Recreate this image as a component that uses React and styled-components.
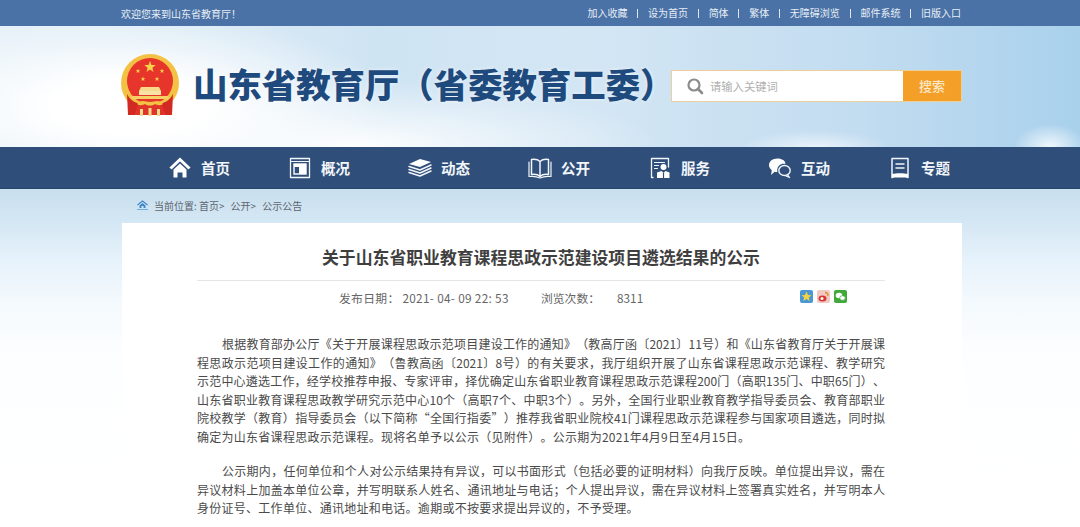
import React from "react";
import styled, { createGlobalStyle } from "styled-components";

const Global = createGlobalStyle`
  html, body { margin: 0; padding: 0; background: #fff; overflow: hidden; }
  body { font-family: "Noto Sans CJK SC", "Noto Sans", sans-serif; text-spacing-trim: space-all; font-kerning: none; }
`;
const Page = styled.div`
  width: 1080px; height: 527px; overflow: hidden; background: #fff;
`;
const Inner = styled.div`
  width: 840px; margin-left: 121px; display: flex; align-items: center;
`;
const TopBar = styled.div`
  height: 26px; background: #4a72a6; color: #e8eef6; font-size: 10px;
  display: flex; align-items: center;
`;
const Welcome = styled.span` flex: 1; `;
const TopLinks = styled.div` display: flex; align-items: center; `;
const TopLink = styled.a`
  color: #e8eef6; line-height: 10px;
  & + &::before {
    content: ""; display: inline-block; width: 1px; height: 9px; background: #dfe7f2;
    margin: 0 9.8px; vertical-align: -1px;
  }
`;
const Sky = styled.header`
  height: 121px; display: flex; align-items: center; padding-bottom: 3px; box-sizing: border-box;
  background:
    radial-gradient(ellipse 36px 22px at 1050px 120px, rgba(255,255,255,.8), transparent 100%),
    radial-gradient(ellipse 75px 18px at 815px 122px, rgba(255,255,255,.65), transparent 100%),
    radial-gradient(ellipse 300px 65px at 360px 120px, rgba(255,255,255,.95), transparent 100%),
    radial-gradient(ellipse 260px 95px at 130px 80px, rgba(255,255,255,1) 30%, transparent 100%),
    linear-gradient(90deg, #e4f0f8 0, #cfe4f3 35%, #d3e6f4 55%, #c2dcf0 80%, #a9d1ec 100%);
`;
const SiteTitle = styled.h1`
  margin: -4px 0 0 14px; width: 478px; font-size: 34.4px; font-weight: 900; line-height: 1;
  color: #1f4a7e; white-space: nowrap;
  text-shadow: 0 0 4px rgba(255,255,255,.6);
`;
const SearchBox = styled.form`
  width: 291px; height: 32px; box-sizing: border-box; display: flex; margin-top: 1px; flex: none;
  border: 1px solid #ecd09a; background: #fff;
`;
const SearchField = styled.div`
  flex: 1; display: flex; align-items: center; gap: 6px; padding-left: 14px;
  font-size: 11.3px; color: #b0b0b0;
`;
const SearchButton = styled.div`
  width: 58px; background: #f49f27; color: #fbe8c8; font-size: 13px; font-weight: 500;
  display: flex; align-items: center; justify-content: center;
`;
const Nav = styled.nav`
  height: 42px; background: #2f4f7a; border-bottom: 1px solid #28466d; box-sizing: border-box;
`;
const NavRow = styled.div`
  width: 840px; margin-left: 122px; height: 100%; display: grid; grid-template-columns: repeat(7, 120px);
`;
const NavItem = styled.a`
  display: flex; align-items: center; padding-left: 46px; color: #f2f5f9;
  font-size: 14.5px; font-weight: 700; gap: 9px;
`;
const NavIcon = styled.svg` width: 24px; height: 24px; flex: none; `;
const Lower = styled.div`
  height: 338px;
  background: linear-gradient(180deg, #c9dfed 0, #d3e6f3 30px, #e6f2fb 70px, #f3f9fd 110px, #fdfeff 165px, #fff 100%);
`;
const Crumbs = styled.div`
  height: 34px; padding: 0 0 2px 137px; display: flex; align-items: center; gap: 6px;
  font-size: 10px; color: #5d6670; box-sizing: border-box;
`;
const CrumbPart = styled.span` margin-right: 6px; `;
const Card = styled.article`
  width: 840px; margin-left: 122px; background: #fff; height: 304px; box-sizing: border-box;
  padding: 0 77px 0 75px;
`;
const Heading = styled.h2`
  margin: 0; height: 58px; box-sizing: border-box; padding-top: 22px; text-align: center;
  font-size: 16.85px; line-height: 24px; font-weight: 700; color: #3f3f3f;
  border-bottom: 1px solid #e6e6e6; white-space: nowrap;
`;
const Meta = styled.div`
  height: 31px; display: flex; align-items: center; padding-left: 142px;
  font-size: 11.8px; color: #666; white-space: nowrap;
`;
const MetaItem = styled.span`
  width: ${p => p.$w}px; flex: none; padding-top: 2px; letter-spacing: ${p => p.$ls || 0}px;
`;
const Shares = styled.div` margin-left: 156px; display: flex; gap: 4px; `;
const ShareIcon = styled.svg` width: 13px; height: 13px; display: block; `;
const Body = styled.div`
  margin-top: 23px; font-size: 12px; line-height: 18.5px; color: #4a4a4a;
`;
const Para = styled.p` margin: 0 0 16px; `;
const Line = styled.span`
  display: block; height: 18.5px;
  padding-left: ${p => (p.$first ? "25px" : "0")};
  text-align: justify;
  text-align-last: ${p => (p.$last ? "left" : "justify")};
  white-space: ${p => (p.$last ? "nowrap" : "normal")};
  letter-spacing: ${p => (p.$last ? ".27px" : "0")};
`;

const stroke = { fill: "none", stroke: "#f2f5f9", strokeWidth: 1.5, strokeLinejoin: "round", strokeLinecap: "round" };

const icons = [
  <g key="h">
    <path d="M2.5 12.5 12 3.5l9.5 9" fill="none" stroke="#fff" strokeWidth="3" strokeLinejoin="miter" />
    <path d="M5.5 13.5 12 7.5l6.5 6v8h-4v-5h-5v5h-4z" fill="#fff" />
  </g>,
  <g key="o">
    <rect x="2.5" y="2.5" width="19" height="19" {...stroke} strokeWidth="1.3" />
    <path d="M2.5 5.5h19" {...stroke} strokeWidth="1" />
    <rect x="6" y="8" width="12" height="10" fill="none" stroke="#fff" strokeWidth="1.4" />
    <rect x="6" y="8" width="12" height="3" fill="#fff" />
    <rect x="11" y="11" width="7" height="7" fill="#fff" />
  </g>,
  <g key="d">
    <path d="M1 8l11-5 11 3-11 5z" fill="#fff" />
    <path d="M1 10.5l11 3.5 11-5M1 13.5l11 3.5 11-5M1 16.5l11 3.5 11-5" {...stroke} />
  </g>,
  <g key="g">
    <path d="M12 5.500C10 3.500 7 3 3.500 3.500v15c3.500-.5 6.500 0 8.500 2 2-2 5-2.500 8.500-2v-15C17 3 14 3.500 12 5.500zM12 5.500v15" {...stroke} strokeWidth="1.500" />
    <path d="M1 6v14.500c4-.5 7.500-.2 11 1.500 3.500-1.700 7-2 11-1.500V6" {...stroke} strokeWidth="1.200" />
  </g>,
  <g key="f">
    <path d="M5 21.500H3.500v-19h17V11" {...stroke} strokeWidth="1.300" />
    <path d="M6.500 6.500h10M6.500 9.500h4M6.500 12.500h3" {...stroke} strokeWidth="1.200" />
    <circle cx="15.500" cy="11" r="3" fill="#fff" />
    <path d="M9 22v-5.500l4.500-1.500 2 2 2-2 4 1.500V22z" fill="#fff" />
    <path d="M15.500 17v5" stroke="#2f4f7a" strokeWidth="1.200" />
  </g>,
  <g key="c">
    <path d="M9.500 2.500c4.500 0 8 2.300 8 5.300-4.500-.8-8.300 2-8.300 6.400 0 .6.100 1.200.2 1.700-1 .1-1.900 0-2.800-.2L3 19l.8-4.800C2 12.800 1 11 1 9c0-3.700 3.800-6.500 8.500-6.500z" fill="#fff" />
    <ellipse cx="16.500" cy="14.500" rx="5.700" ry="5" {...stroke} strokeWidth="1.400" />
    <path d="M19.500 18.500l2 3-3.500-1.500" {...stroke} strokeWidth="1.300" />
  </g>,
  <g key="z">
    <path d="M4 2.500h16v19l-4-2.500H8l-4 2.500z" {...stroke} />
    <path d="M4 21.500V18c4-1 12-1 16 0v3.500H4z" fill="#fff" />
    <path d="M8 8h8M8 12h8" {...stroke} />
  </g>,
];
const navNames = ["首页", "概况", "动态", "公开", "服务", "互动", "专题"];
const topLinks = ["加入收藏", "设为首页", "简体", "繁体", "无障碍浏览", "邮件系统", "旧版入口"];

const para1 = [
  "根据教育部办公厅《关于开展课程思政示范项目建设工作的通知》（教高厅函〔2021〕11号）和《山东省教育厅关于开展课",
  "程思政示范项目建设工作的通知》（鲁教高函〔2021〕8号）的有关要求，我厅组织开展了山东省课程思政示范课程、教学研究",
  "示范中心遴选工作，经学校推荐申报、专家评审，择优确定山东省职业教育课程思政示范课程200门（高职135门、中职65门）、",
  "山东省职业教育课程思政教学研究示范中心10个（高职7个、中职3个）。另外，全国行业职业教育教学指导委员会、教育部职业",
  "院校教学（教育）指导委员会（以下简称“全国行指委”）推荐我省职业院校41门课程思政示范课程参与国家项目遴选，同时拟",
  "确定为山东省课程思政示范课程。现将名单予以公示（见附件）。公示期为2021年4月9日至4月15日。",
];
const para2 = [
  "公示期内，任何单位和个人对公示结果持有异议，可以书面形式（包括必要的证明材料）向我厅反映。单位提出异议，需在",
  "异议材料上加盖本单位公章，并写明联系人姓名、通讯地址与电话；个人提出异议，需在异议材料上签署真实姓名，并写明本人",
  "身份证号、工作单位、通讯地址和电话。逾期或不按要求提出异议的，不予受理。",
];

function Emblem() {
  const star = (x, y, r) => {
    const pts = [];
    for (let i = 0; i < 10; i++) {
      const a = -Math.PI / 2 + (i * Math.PI) / 5;
      const d = i % 2 ? r * 0.42 : r;
      pts.push(`${(x + d * Math.cos(a)).toFixed(1)},${(y + d * Math.sin(a)).toFixed(1)}`);
    }
    return <polygon key={`${x}${y}`} points={pts.join(" ")} fill="#f7d24a" />;
  };
  return (
    <svg width="58" height="62" viewBox="0 0 58 62" style={{ flex: "none" }}>
      <circle cx="29" cy="29" r="29" fill="#f3c244" />
      <circle cx="29" cy="27" r="23" fill="#e8352b" />
      {star(29, 13, 6)}
      {star(17, 17, 2.4)}
      {star(41, 17, 2.4)}
      {star(22, 25, 2.4)}
      {star(36, 25, 2.4)}
      <path d="M20 33h18l2 4H18z" fill="#f6d98a" />
      <rect x="18" y="37" width="22" height="4" fill="#f8e3a6" />
      <rect x="10" y="42" width="38" height="3" rx="1.500" fill="#f6d066" />
      <path d="M6 40c3 6 8 9 14 10l-2 5-4 6H7z" fill="#d22a22" />
      <path d="M52 40c-3 6-8 9-14 10l2 5 4 6h7z" fill="#d22a22" />
      <path d="M14 61h30l-3-11c-3-3-5-3-6 0l-6-3-6 3c-1-3-3-3-6 0z" fill="#e0342a" />
      <path d="M16 50c4-5 8-2 13-2s9-3 13 2c-3 2-6 1-8 0-3 2-7 2-10 0-2 1-5 2-8 0z" fill="#f3c244" />
      <rect x="19" y="55" width="3" height="7" fill="#f6d98a" />
      <rect x="36" y="55" width="3" height="7" fill="#f6d98a" />
      <rect x="27.500" y="54" width="3" height="8" fill="#f6d98a" />
    </svg>
  );
}

export default function App() {
  return (
    <Page>
      <Global />
      <TopBar>
        <Inner>
          <Welcome>欢迎您来到山东省教育厅！</Welcome>
          <TopLinks>
            {topLinks.map(t => <TopLink key={t}>{t}</TopLink>)}
          </TopLinks>
        </Inner>
      </TopBar>
      <Sky>
        <Inner>
          <Emblem />
          <SiteTitle>山东省教育厅（省委教育工委）</SiteTitle>
          <SearchBox>
            <SearchField>
              <svg width="18" height="18" viewBox="0 0 18 18">
                <circle cx="8" cy="8" r="5.500" fill="none" stroke="#8c8c8c" strokeWidth="2.200" />
                <path d="M12 12l4 4" stroke="#8c8c8c" strokeWidth="2.600" strokeLinecap="round" />
              </svg>
              请输入关键词
            </SearchField>
            <SearchButton>搜索</SearchButton>
          </SearchBox>
        </Inner>
      </Sky>
      <Nav>
        <NavRow>
          {navNames.map((n, i) => (
            <NavItem key={n}>
              <NavIcon viewBox="0 0 24 24">{icons[i]}</NavIcon>
              {n}
            </NavItem>
          ))}
        </NavRow>
      </Nav>
      <Lower>
        <Crumbs>
          <svg width="11" height="10" viewBox="0 0 11 10">
            <path d="M.5 5 5.500 1l5 4" fill="none" stroke="#3f86c9" strokeWidth="1.200" />
            <path d="M2.500 5.500 5.500 3l3 2.500V8h-6z" fill="#3f86c9" />
            <rect x="4.500" y="6" width="2" height="2" fill="#d7e8f3" />
            <rect x="0" y="9" width="11" height="1" fill="#6db0e6" />
          </svg>
          <span>
            <CrumbPart>当前位置: 首页&gt;</CrumbPart>
            <CrumbPart>公开&gt;</CrumbPart>
            <CrumbPart>公示公告</CrumbPart>
          </span>
        </Crumbs>
        <Card>
          <Heading>关于山东省职业教育课程思政示范建设项目遴选结果的公示</Heading>
          <Meta>
            <MetaItem $w={202} $ls={0.3}>发布日期： 2021- 04- 09 22: 53</MetaItem>
            <MetaItem $w={76}>浏览次数：</MetaItem>
            <MetaItem $w={27}>8311</MetaItem>
            <Shares>
              <ShareIcon viewBox="0 0 13 13">
                <rect width="13" height="13" rx="2" fill="#4a97d6" />
                <polygon points="6.500,1.500 8,5 11.500,5.300 8.800,7.500 9.700,11 6.500,9 3.300,11 4.200,7.500 1.500,5.300 5,5" fill="#f5d23f" />
              </ShareIcon>
              <ShareIcon viewBox="0 0 13 13">
                <rect width="13" height="13" rx="2" fill="#f0c9c4" />
                <ellipse cx="5.500" cy="8.500" rx="4" ry="3" fill="#d8352c" />
                <circle cx="5" cy="8.500" r="1.500" fill="#fff" />
                <path d="M8 2.500a3 3 0 0 1 3 3.500" fill="none" stroke="#e58a2c" strokeWidth="1.300" />
              </ShareIcon>
              <ShareIcon viewBox="0 0 13 13">
                <rect width="13" height="13" rx="2" fill="#3fa93a" />
                <ellipse cx="5" cy="5.500" rx="3.300" ry="2.800" fill="#fff" />
                <ellipse cx="8.500" cy="8" rx="2.800" ry="2.300" fill="#fff" stroke="#3fa93a" strokeWidth=".7" />
              </ShareIcon>
            </Shares>
          </Meta>
          <Body>
            <Para>
              {para1.map((l, i) => (
                <Line key={i} $first={i === 0} $last={i === para1.length - 1}>{l}</Line>
              ))}
            </Para>
            <Para>
              {para2.map((l, i) => (
                <Line key={i} $first={i === 0} $last={i === para2.length - 1}>{l}</Line>
              ))}
            </Para>
          </Body>
        </Card>
      </Lower>
    </Page>
  );
}
